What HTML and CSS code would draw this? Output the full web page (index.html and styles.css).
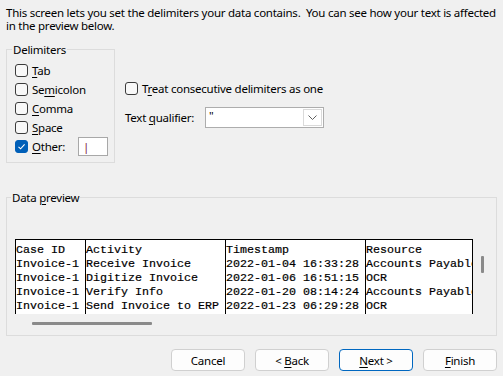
FILE: index.html
```html
<!DOCTYPE html>
<html lang="en">
<head>
    <meta charset="UTF-8">
    <title>Text Import Wizard - Step 2 of 3</title>
    <link rel="stylesheet" href="styles.css">
</head>
<body>
    <div class="wizard">
        <p class="intro">This screen lets you set the delimiters your data contains.&nbsp; You can see how your text is affected<br>in the preview below.</p>

        <div class="options">
            <fieldset class="group delimiters">
                <legend>Delimiters</legend>
                <div class="check"><span class="box"></span><span><u>T</u>ab</span></div>
                <div class="check"><span class="box"></span><span>Se<u>m</u>icolon</span></div>
                <div class="check"><span class="box"></span><span><u>C</u>omma</span></div>
                <div class="check"><span class="box"></span><span><u>S</u>pace</span></div>
                <div class="check">
                    <span class="box checked">
                        <svg width="9" height="9" viewBox="0 0 9 9"><path d="M1.5 4.8 L3.6 6.8 L7.6 2.4" fill="none" stroke="#fff" stroke-width="1.1"/></svg>
                    </span>
                    <span><u>O</u>ther:</span>
                    <span class="other-input">|</span>
                </div>
            </fieldset>

            <div class="side">
                <div class="check"><span class="box"></span><span>T<u>r</u>eat consecutive delimiters as one</span></div>
                <div class="qualifier">
                    <span class="qualifier-label">Text <u>q</u>ualifier:</span>
                    <div class="select">
                        <span class="select-value">"</span>
                        <span class="select-arrow">
                            <svg width="9" height="5" viewBox="0 0 9 5"><path d="M0.5 0.5 L4.5 4.5 L8.5 0.5" fill="none" stroke="#606060" stroke-width="1"/></svg>
                        </span>
                    </div>
                </div>
            </div>
        </div>

        <fieldset class="group preview">
            <legend>Data <u>p</u>review</legend>
            <div class="preview-body">
                <div class="grid">
                    <div class="col col-case">Case ID
Invoice-1
Invoice-1
Invoice-1
Invoice-1</div>
                    <div class="col col-wide">Activity
Receive Invoice
Digitize Invoice
Verify Info
Send Invoice to ERP</div>
                    <div class="col col-wide">Timestamp
2022-01-04 16:33:28
2022-01-06 16:51:15
2022-01-20 08:14:24
2022-01-23 06:29:28</div>
                    <div class="col col-last">Resource
Accounts Payable
OCR
Accounts Payable
OCR</div>
                </div>
                <div class="vscroll"><div class="vthumb"></div></div>
            </div>
            <div class="hscroll"><div class="hthumb"></div></div>
        </fieldset>

        <div class="buttons">
            <button class="btn">Cancel</button>
            <button class="btn">&lt; <u>B</u>ack</button>
            <button class="btn btn-default"><u>N</u>ext &gt;</button>
            <button class="btn"><u>F</u>inish</button>
        </div>
    </div>
</body>
</html>
```

FILE: styles.css
```css
body {
    margin: 0;
    background: #f0f0f0;
    font-family: "Noto Sans", "Open Sans", sans-serif;
    font-size: 11.5px;
    letter-spacing: -0.25px;
    color: #000;
}

.wizard {
    padding: 0 6px;
}

.intro {
    margin: 0;
    padding-top: 6px;
    line-height: 13px;
    white-space: nowrap;
}

u {
    text-decoration-thickness: 1px;
    text-underline-offset: 2px;
}

/* group boxes */
.group {
    margin: 0;
    border: 1px solid #dcdcdc;
    min-width: 0;
}

.group legend {
    padding: 0 1px;
    margin-left: -3px;
    line-height: 13px;
}

.options {
    display: flex;
    margin-top: 11px;
}

.delimiters {
    width: 109px;
    box-sizing: border-box;
    padding: 5px 6px 6px 8px;
}

.check {
    display: flex;
    align-items: center;
    height: 19px;
    white-space: nowrap;
}

.box {
    width: 13px;
    height: 13px;
    box-sizing: border-box;
    border: 1px solid #3b3b3b;
    border-radius: 3px;
    background: #f8f8f8;
    margin-right: 4px;
    flex-shrink: 0;
    display: flex;
    align-items: center;
    justify-content: center;
}

.box.checked {
    background: #005fb8;
    border-color: #005fb8;
}

.other-input {
    margin-left: auto;
    width: 30px;
    height: 19px;
    box-sizing: border-box;
    border: 1px solid #a8a8a8;
    background: #fff;
    color: #7a1f3d;
    padding-left: 4px;
    line-height: 17px;
}

.side {
    margin-left: 10px;
    padding-top: 36px;
}

.qualifier {
    display: flex;
    align-items: center;
    margin-top: 9px;
}

.qualifier-label {
    width: 80px;
}

.select {
    display: flex;
    width: 119px;
    height: 21px;
    box-sizing: border-box;
    border: 1px solid #adadad;
    background: #fff;
}

.select-value {
    flex: 1;
    padding-left: 3px;
    line-height: 15px;
}

.select-arrow {
    width: 17px;
    margin: 1px;
    border: 1px solid #dadada;
    display: flex;
    align-items: center;
    justify-content: center;
}

/* data preview */
.preview {
    margin-top: 28px;
    padding: 35px 8px 10px 8px;
}

.preview legend {
    margin-left: -4px;
}

.preview-body {
    display: flex;
}

.grid {
    display: flex;
    background: #fff;
    border-top: 1px solid #000;
    border-right: 1px solid #000;
    font-family: "Liberation Mono", "Courier New", monospace;
    font-size: 11.67px;
    letter-spacing: 0;
    line-height: 14px;
    -webkit-text-stroke: 0.2px #000;
}

.col {
    border-left: 1px solid #000;
    padding: 3px 0 1px 0;
    white-space: pre;
    overflow: hidden;
    box-sizing: border-box;
}

.col-case {
    width: 70px;
}

.col-wide {
    width: 140px;
}

.col-last {
    width: 107px;
}

.vscroll {
    margin-left: 8px;
}

.vthumb {
    margin-top: 17px;
    width: 3px;
    height: 17px;
    background: #8a8a8a;
    border-radius: 1px;
}

.hscroll {
    margin-top: 8px;
}

.hthumb {
    margin-left: 17px;
    width: 120px;
    height: 3px;
    background: #8a8a8a;
    border-radius: 1px;
}

/* buttons */
.buttons {
    display: flex;
    justify-content: flex-end;
    gap: 10px;
    margin-top: 13px;
}

.btn {
    width: 74px;
    height: 22px;
    padding: 0;
    font-family: inherit;
    font-size: 11.5px;
    letter-spacing: -0.25px;
    color: #000;
    background: #fdfdfd;
    border: 1px solid #d0d0d0;
    border-radius: 4px;
}

.btn-default {
    border-color: #0067c0;
}
```
